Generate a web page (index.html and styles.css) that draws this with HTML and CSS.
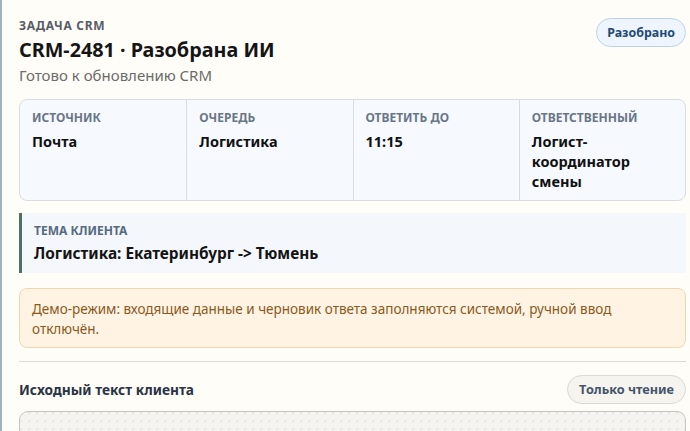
FILE: index.html
```html
<!DOCTYPE html>
<html lang="ru">
<head>
<meta charset="utf-8">
<title>CRM-2481</title>
<link rel="stylesheet" href="styles.css">
</head>
<body>
<div class="panel">
  <header class="head">
    <div class="head-text">
      <div class="eyebrow">ЗАДАЧА CRM</div>
      <h1 class="title">CRM-2481 · Разобрана ИИ</h1>
      <div class="subtitle">Готово к обновлению CRM</div>
    </div>
    <span class="pill pill-blue">Разобрано</span>
  </header>

  <div class="meta">
    <div class="meta-cell">
      <div class="meta-label">ИСТОЧНИК</div>
      <div class="meta-value">Почта</div>
    </div>
    <div class="meta-cell">
      <div class="meta-label">ОЧЕРЕДЬ</div>
      <div class="meta-value">Логистика</div>
    </div>
    <div class="meta-cell">
      <div class="meta-label">ОТВЕТИТЬ ДО</div>
      <div class="meta-value">11:15</div>
    </div>
    <div class="meta-cell">
      <div class="meta-label">ОТВЕТСТВЕННЫЙ</div>
      <div class="meta-value">Логист-координатор смены</div>
    </div>
  </div>

  <div class="topic">
    <div class="topic-label">ТЕМА КЛИЕНТА</div>
    <div class="topic-value">Логистика: Екатеринбург -&gt; Тюмень</div>
  </div>

  <div class="notice">Демо-режим: входящие данные и черновик ответа заполняются системой, ручной ввод отключён.</div>

  <hr class="divider">

  <div class="section-head">
    <h2 class="section-title">Исходный текст клиента</h2>
    <span class="pill pill-gray">Только чтение</span>
  </div>

  <div class="source-box"></div>
</div>
</body>
</html>
```
FILE: styles.css
```css
* { box-sizing: border-box; }
html, body {
  margin: 0;
  padding: 0;
  background: #fffdf8;
  font-family: "Noto Sans", "Open Sans", sans-serif;
  color: #141414;
}
.panel {
  border-left: 2px solid #9fb2c6;
  padding: 18px 4px 0 17px;
  height: 431px;
  overflow: hidden;
}
.head {
  display: flex;
  justify-content: space-between;
  align-items: flex-start;
}
.eyebrow {
  font-size: 12px;
  font-weight: 700;
  color: #585c66;
  letter-spacing: 0.7px;
  line-height: 16px;
}
.title {
  margin: 3px 0 0;
  font-size: 19.8px;
  font-weight: 700;
  line-height: 26px;
  color: #151515;
}
.subtitle {
  margin-top: 2px;
  font-size: 15px;
  line-height: 20px;
  color: #6b6b6b;
}
.pill {
  display: inline-flex;
  align-items: center;
  border-radius: 999px;
  font-weight: 700;
  line-height: 17px;
  white-space: nowrap;
}
.pill-blue {
  padding: 5px 10px;
  font-size: 12.4px;
  background: #eef5ff;
  border: 1px solid #bcd2ea;
  color: #1f4a73;
}
.pill-gray {
  padding: 5px 11px;
  font-size: 12.7px;
  background: #f6f4ef;
  border: 1px solid #ddd9d0;
  color: #44546a;
}
.meta {
  margin-top: 14px;
  display: grid;
  grid-template-columns: repeat(4, 1fr);
  background: #f6faff;
  border: 1px solid #d9dde2;
  border-radius: 8px;
}
.meta-cell {
  padding: 10px 12px 9px 12px;
  border-left: 1px solid #d9dde2;
}
.meta-cell:first-child { border-left: none; }
.meta-label {
  font-size: 12px;
  font-weight: 700;
  color: #6a7687;
  line-height: 16px;
}
.meta-value {
  margin-top: 5px;
  font-size: 14.5px;
  font-weight: 700;
  line-height: 20px;
  color: #111;
}
.topic {
  margin-top: 12px;
  background: #f4f7fc;
  border-left: 3px solid #4e7262;
  padding: 10px 12px 9px 12px;
}
.topic-label {
  font-size: 12px;
  font-weight: 700;
  color: #566a80;
  line-height: 16px;
}
.topic-value {
  margin-top: 5px;
  font-size: 15.4px;
  font-weight: 700;
  line-height: 20px;
  color: #141414;
}
.notice {
  margin-top: 15px;
  background: #fff4e4;
  border: 1px solid #efd7b0;
  border-radius: 8px;
  padding: 10px 12px 8px 12px;
  font-size: 13.5px;
  line-height: 20px;
  color: #8a5a1c;
}
.divider {
  margin: 13px 0 0;
  border: none;
  border-top: 1px solid #dedbd5;
}
.section-head {
  margin-top: 13px;
  display: flex;
  justify-content: space-between;
  align-items: center;
}
.section-title {
  margin: 0;
  font-size: 13.7px;
  font-weight: 700;
  color: #283345;
  line-height: 18px;
}
.source-box {
  margin-top: 7px;
  height: 80px;
  border: 1px solid #c9c6bf;
  border-radius: 9px;
  background-color: #f5f4f0;
  background-image: linear-gradient(135deg, #ebe9e3 22%, transparent 22%);
  background-size: 8px 8px;
}
```
